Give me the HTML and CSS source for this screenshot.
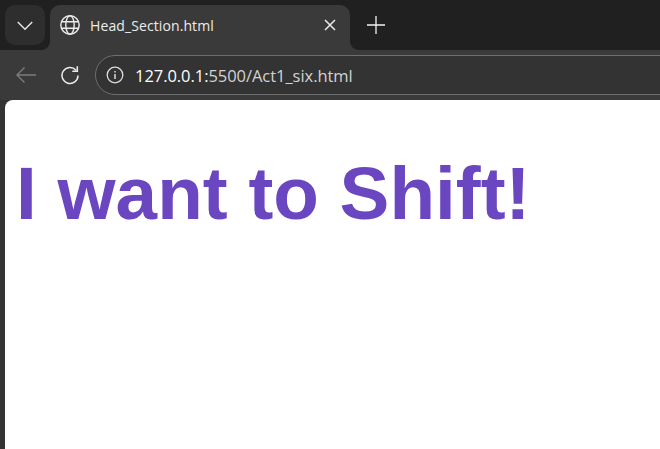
FILE: index.html
```html
<!DOCTYPE html>
<html lang="en">
<head>
<meta charset="utf-8">
<title>Head_Section.html</title>
<link rel="stylesheet" href="styles.css">
</head>
<body>
<div class="tabstrip">
  <div class="tab-search">
    <svg class="icon" width="16" height="16" viewBox="0 0 16 16"><path d="M0.8 5 8 12.2 15.2 5" fill="none" stroke="#e8e8e8" stroke-width="1.4"/></svg>
  </div>
  <div class="tab">
    <svg class="globe" width="20" height="20" viewBox="0 0 20 20" fill="none" stroke="#ececec" stroke-width="1.4"><circle cx="10" cy="10" r="9.2"/><ellipse cx="10" cy="10" rx="4.2" ry="9.2"/><path d="M1.6 6.8H18.4M1.6 13.2H18.4"/></svg>
    <span class="tab-title">Head_Section.html</span>
    <svg class="close" width="12" height="12" viewBox="0 0 12 12"><path d="M1 1 11 11M11 1 1 11" stroke="#ececec" stroke-width="1.5"/></svg>
  </div>
  <div class="new-tab">
    <svg width="18" height="18" viewBox="0 0 18 18"><path d="M9 0V18M0 9H18" stroke="#f2f2f2" stroke-width="1.3"/></svg>
  </div>
</div>
<div class="toolbar">
  <svg class="back" width="22" height="18" viewBox="0 0 22 18" fill="none" stroke="#7c7c7c" stroke-width="1.4"><path d="M21 9H2M9.5 1.5 2 9 9.5 16.5"/></svg>
  <svg class="reload" width="20" height="20" viewBox="0 0 20 20" fill="none" stroke="#ececec" stroke-width="1.5"><path d="M16 5.2A8 8 0 1 0 18 10.5"/><path d="M17.3 1.2V6.2H12.3" stroke-width="1.6"/></svg>
  <div class="omnibox">
    <svg class="info" width="18" height="18" viewBox="0 0 18 18" fill="none" stroke="#dcdcdc" stroke-width="1.3"><circle cx="9" cy="9" r="7.8"/><path d="M9 8V13M9 5V6.4" stroke-width="1.5"/></svg>
    <span class="url"><span class="host">127.0.0.1:</span>5500/Act1_six.html</span>
  </div>
</div>
<div class="viewport">
  <div class="page">
    <h1>I want to Shift!</h1>
  </div>
</div>
</body>
</html>
```
FILE: styles.css
```css
* { box-sizing: border-box; }
html, body { margin: 0; height: 100%; overflow: hidden; }
body { background: #333; font-family: "Segoe UI", "Open Sans", "Noto Sans", sans-serif; display: flex; flex-direction: column; }
.tabstrip { height: 50px; background: #202020; display: flex; align-items: flex-start; padding: 5px 0 0 5px; flex: none; }
.tab-search { width: 40px; height: 40px; border-radius: 10px; background: #2e2e2e; display: flex; align-items: center; justify-content: center; }
.tab { position: relative; width: 300px; height: 45px; margin-left: 5px; background: #3a3a3a; border-radius: 10px 10px 0 0; display: flex; align-items: center; padding: 0 14px 5px 10px; color: #ececec; }
.tab::before, .tab::after { content: ""; position: absolute; bottom: 0; width: 8px; height: 8px; background: radial-gradient(circle at 0 0, #202020 7.5px, #3a3a3a 8px); }
.tab::before { left: -8px; }
.tab::after { right: -8px; transform: scaleX(-1); }
.globe { flex: none; }
.tab-title { font-family: "Open Sans", sans-serif; font-size: 14px; margin-left: 10px; flex: 1; letter-spacing: 0.1px; }
.new-tab { margin-left: 17px; height: 40px; display: flex; align-items: center; }
.toolbar { height: 50px; flex: none; padding: 5px 0; background: #3a3a3a; display: flex; align-items: center; }
.back { margin-left: 15px; flex: none; }
.reload { margin-left: 23px; flex: none; }
.omnibox { flex: 1; height: 40px; margin-left: 15px; margin-right: -30px; border: 1px solid #6e6e6e; border-radius: 20px; background: #333; display: flex; align-items: center; padding-left: 10px; }
.url { font-family: "Open Sans", sans-serif; font-size: 16.5px; color: #d2d2d2; margin-left: 11px; letter-spacing: -0.05px; }
.host { color: #fff; }
.viewport { flex: 1; padding-left: 5px; min-height: 0; }
.page { height: 100%; background: #fff; border-radius: 8px 0 0 0; padding: 47px 11px 0; }
h1 { margin: 0; font-family: "Liberation Sans", Arial, sans-serif; font-size: 74.7px; font-weight: 700; line-height: 92px; color: #6a46c0; white-space: nowrap; }
```
